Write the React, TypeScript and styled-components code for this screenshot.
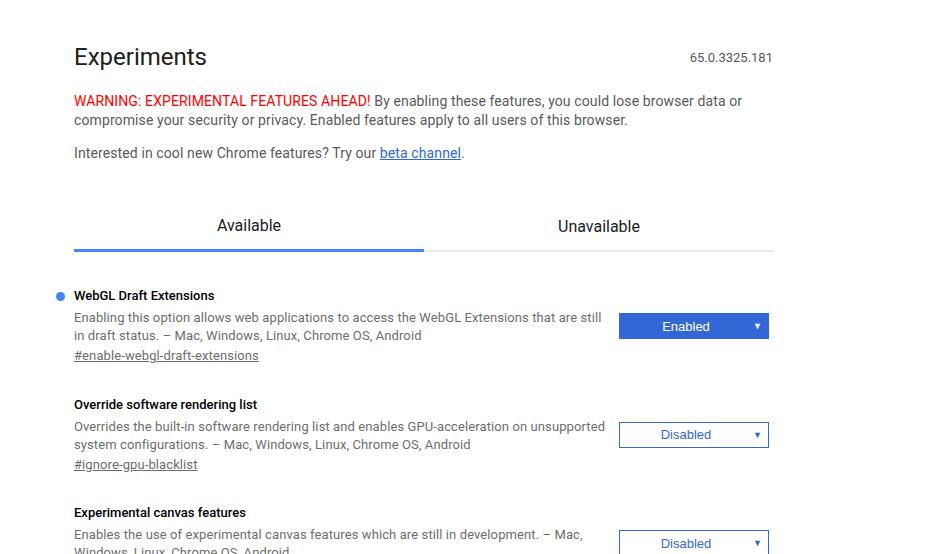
import React from "react";
import styled, { createGlobalStyle } from "styled-components";

const GlobalStyle = createGlobalStyle`
  html, body {
    margin: 0;
    padding: 0;
    background: #fff;
  }
  body {
    font-family: Roboto, "Noto Sans", Arial, sans-serif;
    color: #5a5a5a;
    overflow: hidden;
  }
`;

const Page = styled.main`
  width: 700px;
  margin: 0 0 0 74px;
  padding-top: 41px;
`;

const Header = styled.header`
  display: flex;
  justify-content: space-between;
  align-items: center;
`;

const Title = styled.h1`
  margin: 0;
  font-size: 24px;
  line-height: 32px;
  font-weight: 400;
  color: #202020;
`;

const Version = styled.span`
  font-size: 13px;
  color: #5a5a5a;
  margin-right: 1px;
`;

const Blurb = styled.p<{ $gap: number }>`
  margin: ${(p) => p.$gap}px 0 0;
  font-size: 14px;
  line-height: 19px;
  letter-spacing: 0.11px;
`;

const Warning = styled.span`
  color: #f00;
`;

const BlueLink = styled.a`
  color: #3367d6;
  text-decoration: underline;
`;

const Tabs = styled.div`
  display: flex;
  margin-top: 38px;
`;

const Tab = styled.div<{ $active?: boolean }>`
  flex: 1;
  text-align: center;
  font-size: 16px;
  line-height: 20px;
  color: #202020;
  padding: ${(p) => (p.$active ? "15px 0 13px" : "16px 0 13px")};
  border-bottom: ${(p) => (p.$active ? "3px solid #4285f4" : "2px solid #ebebeb")};
`;

const List = styled.section`
  margin-top: 35px;
`;

const Experiment = styled.div`
  display: flex;
  align-items: center;
  margin-bottom: 30.5px;
`;

const Info = styled.div`
  flex: 1;
  padding-right: 8px;
`;

const Name = styled.h2<{ $active?: boolean }>`
  position: relative;
  margin: 0;
  font-size: 13px;
  line-height: 18px;
  font-weight: 500;
  color: #000;

  &::before {
    content: "";
    display: ${(p) => (p.$active ? "block" : "none")};
    position: absolute;
    left: -18px;
    top: 5px;
    width: 9px;
    height: 9px;
    border-radius: 50%;
    background: #4285f4;
  }
`;

const Desc = styled.p`
  margin: 4px 0 0;
  font-size: 13px;
  line-height: 18px;
  letter-spacing: 0.1px;
  color: #6e6e6e;
`;

const Permalink = styled.a`
  display: inline-block;
  margin-top: 2px;
  font-size: 13px;
  line-height: 18px;
  letter-spacing: 0.1px;
  color: #6e6e6e;
  text-decoration: underline;
`;

const Select = styled.div<{ $enabled?: boolean }>`
  position: relative;
  box-sizing: border-box;
  width: 150px;
  height: 26px;
  margin-right: 5px;
  padding-right: 16px;
  display: flex;
  align-items: center;
  justify-content: center;
  font-family: "Liberation Sans", Arial, sans-serif;
  font-size: 13px;
  border: 1px solid #3367d6;
  background: ${(p) => (p.$enabled ? "#3367d6" : "#fff")};
  color: ${(p) => (p.$enabled ? "#fff" : "#3367d6")};
`;

const Arrow = styled.span`
  position: absolute;
  right: 6px;
  top: 50%;
  transform: translateY(-50%);
  font-size: 9px;
  line-height: 9px;
`;

type Flag = {
  name: string;
  desc: string;
  id: string;
  enabled?: boolean;
};

const flags: Flag[] = [
  {
    name: "WebGL Draft Extensions",
    desc: "Enabling this option allows web applications to access the WebGL Extensions that are still in draft status. – Mac, Windows, Linux, Chrome OS, Android",
    id: "#enable-webgl-draft-extensions",
    enabled: true,
  },
  {
    name: "Override software rendering list",
    desc: "Overrides the built-in software rendering list and enables GPU-acceleration on unsupported system configurations. – Mac, Windows, Linux, Chrome OS, Android",
    id: "#ignore-gpu-blacklist",
  },
  {
    name: "Experimental canvas features",
    desc: "Enables the use of experimental canvas features which are still in development. – Mac, Windows, Linux, Chrome OS, Android",
    id: "#enable-experimental-canvas-features",
  },
];

export default function App() {
  return (
    <>
      <GlobalStyle />
      <Page>
        <Header>
          <Title>Experiments</Title>
          <Version>65.0.3325.181</Version>
        </Header>
        <Blurb $gap={19}>
          <Warning>WARNING: EXPERIMENTAL FEATURES AHEAD!</Warning> By enabling these
          features, you could lose browser data or compromise your security or privacy.
          Enabled features apply to all users of this browser.
        </Blurb>
        <Blurb $gap={14}>
          Interested in cool new Chrome features? Try our{" "}
          <BlueLink href="#">beta channel</BlueLink>.
        </Blurb>

        <Tabs>
          <Tab $active>Available</Tab>
          <Tab>Unavailable</Tab>
        </Tabs>

        <List>
          {flags.map((f) => (
            <Experiment key={f.id}>
              <Info>
                <Name $active={f.enabled}>{f.name}</Name>
                <Desc>{f.desc}</Desc>
                <Permalink href="#">{f.id}</Permalink>
              </Info>
              <Select $enabled={f.enabled}>
                {f.enabled ? "Enabled" : "Disabled"}
                <Arrow>▼</Arrow>
              </Select>
            </Experiment>
          ))}
        </List>
      </Page>
    </>
  );
}
